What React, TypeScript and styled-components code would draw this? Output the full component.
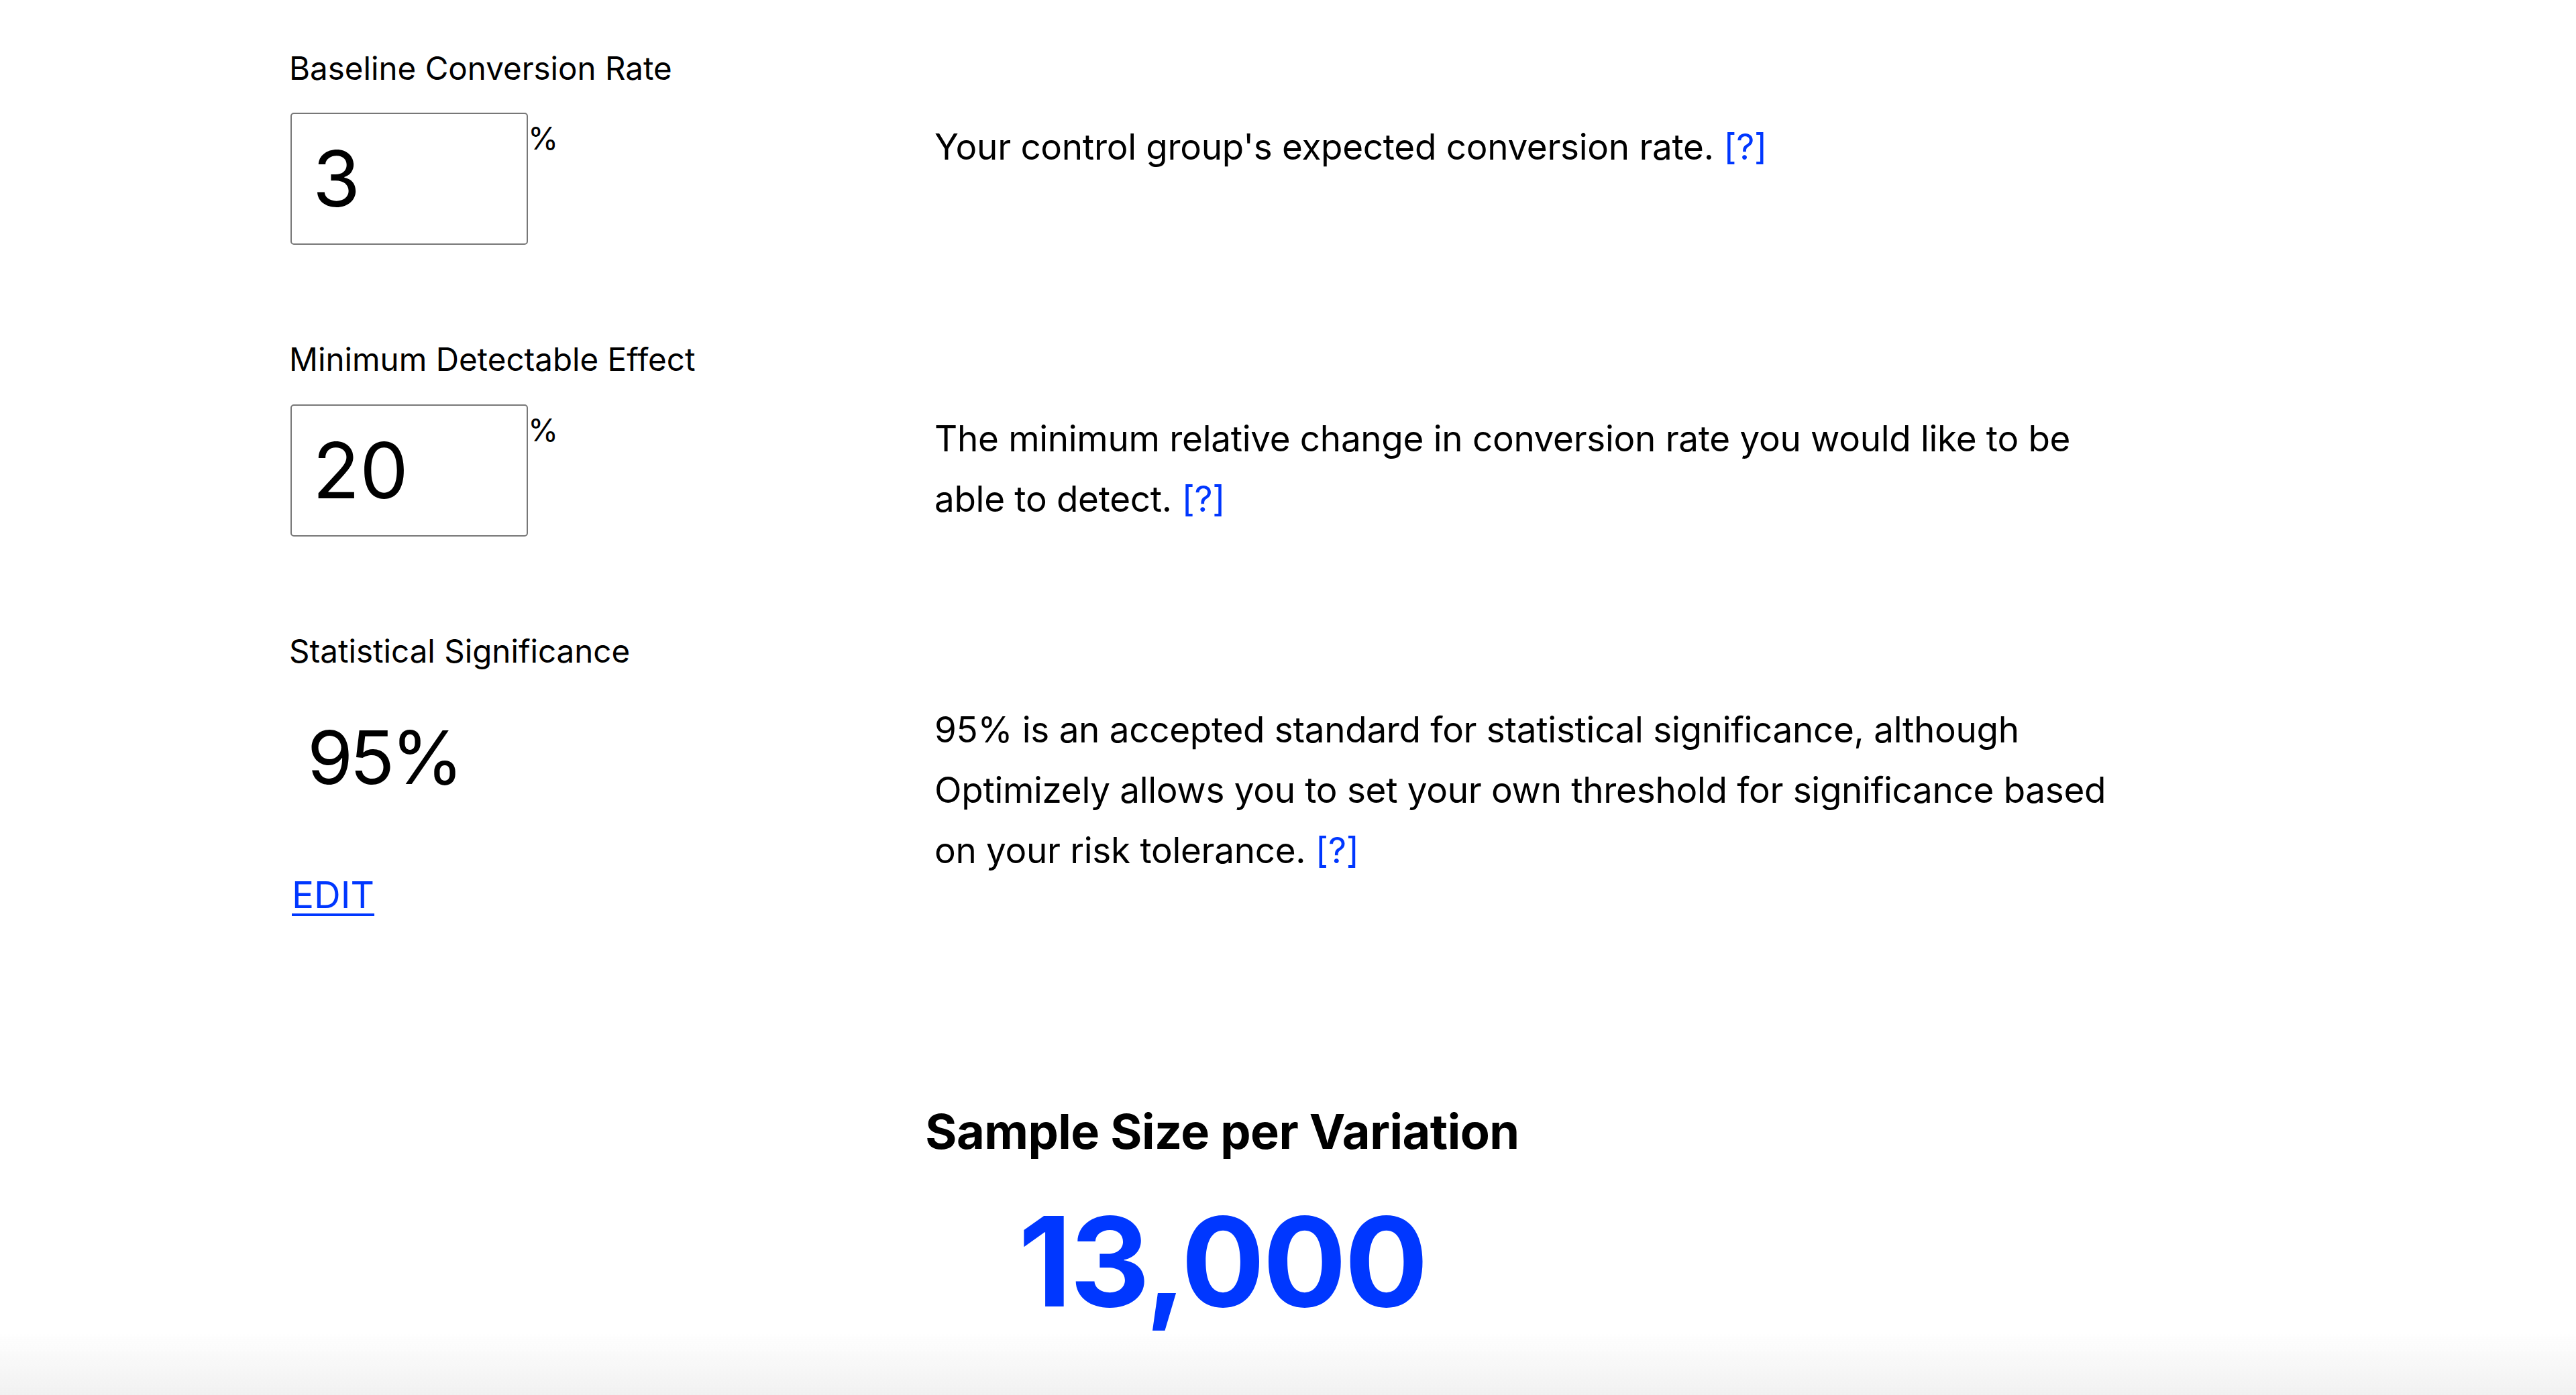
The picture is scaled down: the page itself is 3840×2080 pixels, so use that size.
import { createGlobalStyle } from 'styled-components';
import styled from 'styled-components';

const GlobalStyle = createGlobalStyle`
  html, body {
    margin: 0;
    padding: 0;
    background: #ffffff;
  }

  body {
    font-family: Inter, "Noto Sans", "Liberation Sans", sans-serif;
    color: #000000;
  }
`;

const Page = styled.div`
  min-height: 100vh;
  box-sizing: border-box;
  padding: 73px 0 0 431px;
`;

const Container = styled.div`
  width: 2782px;
`;

const Form = styled.div`
  display: flex;
  flex-direction: column;
  gap: 142px;
`;

const Field = styled.section`
  display: flex;
  flex-direction: column;
  gap: 38px;
`;

const Label = styled.label`
  font-size: 47.5px;
  line-height: 1.21;
  font-weight: 400;
`;

const FieldRow = styled.div`
  display: grid;
  grid-template-columns: 962px 1800px;
  align-items: start;
`;

const InputCell = styled.div`
  display: flex;
  flex-direction: column;
  align-items: flex-start;
`;

const InputWrap = styled.div`
  display: flex;
  align-items: flex-start;
  margin-left: 2px;
`;

const NumberInput = styled.input`
  box-sizing: border-box;
  width: 354px;
  height: 197px;
  padding: 0 31px;
  border: 2px solid #777777;
  border-radius: 5px;
  font-family: inherit;
  font-size: 115px;
  color: #000000;
  background: #ffffff;
  outline: none;
`;

const Unit = styled.span`
  margin-top: 11px;
  font-size: 46px;
  line-height: 1.21;
`;

const StaticValue = styled.div`
  padding: 26px 0 0 27px;
  font-size: 110px;
  line-height: 1.21;
  letter-spacing: -5px;
`;

const EditLink = styled.a`
  margin: 104px 0 0 4px;
  font-size: 55px;
  line-height: 1.21;
  color: #0037ff;
  text-decoration: underline;
  text-decoration-thickness: 4px;
  text-underline-offset: 8px;
  cursor: pointer;
`;

const Description = styled.p`
  margin: 6px 0 0;
  font-size: 53px;
  line-height: 90px;
  letter-spacing: -0.3px;
`;

const HelpLink = styled.a`
  color: #0037ff;
  text-decoration: none;
  cursor: pointer;
`;

const Result = styled.div`
  margin-top: 276px;
  display: flex;
  flex-direction: column;
  align-items: center;
  gap: 40px;
`;

const ResultTitle = styled.h2`
  margin: 0;
  font-size: 72px;
  line-height: 1.21;
  font-weight: 700;
  letter-spacing: -0.5px;
`;

const ResultValue = styled.div`
  font-size: 185px;
  line-height: 1.21;
  font-weight: 700;
  color: #0037ff;
  letter-spacing: -3px;
`;

const BottomFade = styled.div`
  position: fixed;
  left: 0;
  right: 0;
  bottom: 0;
  height: 95px;
  background: linear-gradient(to bottom, rgba(241, 241, 241, 0), #f1f1f1);
  pointer-events: none;
`;

export default function App() {
  return (
    <>
      <GlobalStyle />
      <Page>
        <Container>
          <Form>
            <Field>
              <Label>Baseline Conversion Rate</Label>
              <FieldRow>
                <InputCell>
                  <InputWrap>
                    <NumberInput type="text" defaultValue="3" />
                    <Unit>%</Unit>
                  </InputWrap>
                </InputCell>
                <Description>
                  Your control group's expected conversion rate. <HelpLink>[?]</HelpLink>
                </Description>
              </FieldRow>
            </Field>

            <Field>
              <Label>Minimum Detectable Effect</Label>
              <FieldRow>
                <InputCell>
                  <InputWrap>
                    <NumberInput type="text" defaultValue="20" />
                    <Unit>%</Unit>
                  </InputWrap>
                </InputCell>
                <Description>
                  The minimum relative change in conversion rate you would like to be
                  <br />
                  able to detect. <HelpLink>[?]</HelpLink>
                </Description>
              </FieldRow>
            </Field>

            <Field>
              <Label>Statistical Significance</Label>
              <FieldRow>
                <InputCell>
                  <StaticValue>95%</StaticValue>
                  <EditLink>EDIT</EditLink>
                </InputCell>
                <Description>
                  95% is an accepted standard for statistical significance, although
                  <br />
                  Optimizely allows you to set your own threshold for significance based
                  <br />
                  on your risk tolerance. <HelpLink>[?]</HelpLink>
                </Description>
              </FieldRow>
            </Field>
          </Form>

          <Result>
            <ResultTitle>Sample Size per Variation</ResultTitle>
            <ResultValue>13,000</ResultValue>
          </Result>
        </Container>
      </Page>
      <BottomFade />
    </>
  );
}
